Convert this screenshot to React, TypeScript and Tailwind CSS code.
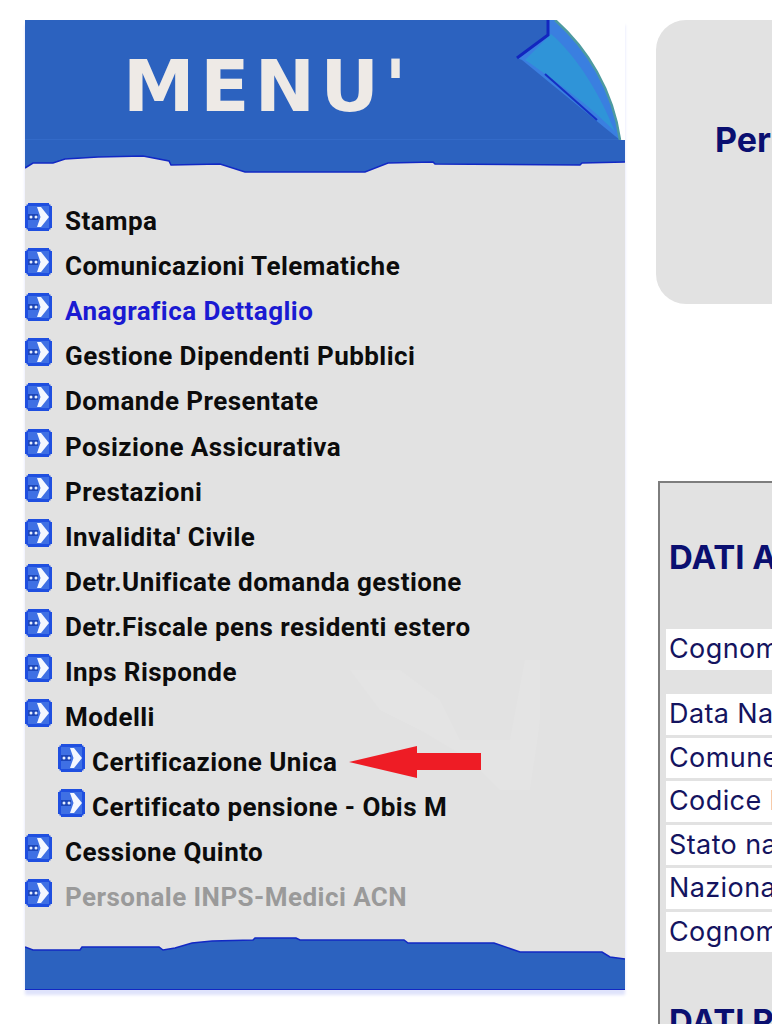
const menuItems = [
  { label: 'Stampa' },
  { label: 'Comunicazioni Telematiche' },
  { label: 'Anagrafica Dettaglio', tone: 'text-[#1a1ad2]' },
  { label: 'Gestione Dipendenti Pubblici' },
  { label: 'Domande Presentate' },
  { label: 'Posizione Assicurativa' },
  { label: 'Prestazioni' },
  { label: "Invalidita' Civile" },
  { label: 'Detr.Unificate domanda gestione' },
  { label: 'Detr.Fiscale pens residenti estero' },
  { label: 'Inps Risponde' },
  { label: 'Modelli' },
  { label: 'Certificazione Unica', sub: true },
  { label: 'Certificato pensione - Obis M', sub: true },
  { label: 'Cessione Quinto' },
  { label: 'Personale INPS-Medici ACN', tone: 'text-[#9a9a9a]' },
];

const dataRows = ['Data Nascita', 'Comune', 'Codice Fiscale', 'Stato nascita', 'Nazionalità', 'Cognome'];

function BulletIcon() {
  return (
    <svg viewBox="0 0 27 28" className="h-[28px] w-[27px] shrink-0">
      <path d="M3 0H24V1.5H25.5V3H27V25H25.5V26.5H24V28H3V26.5H1.5V25H0V3H1.5V1.5H3Z" fill="#1f4fe0" />
      <path d="M3 3H24V25H3Z" fill="#3f70e4" />
      <path d="M12 4H16L24 14L16 24H12L15.5 14Z" fill="#f4f7ff" />
      <path d="M3 11H13V17H3Z" fill="#1d46b8" />
      <circle cx="6" cy="14" r="1.5" fill="#e6eeff" />
      <circle cx="11" cy="14" r="1.5" fill="#e6eeff" />
    </svg>
  );
}

function PageCurl() {
  return (
    <svg viewBox="0 0 110 120" className="absolute right-0 top-0 h-[120px] w-[110px]">
      <path d="M40 0H110V120H105C98 70 72 28 40 0Z" fill="#ffffff" />
      <path d="M34 0H40C72 28 98 70 105 120L100 116L7 40L2 38L34 15Z" fill="#3a7fe0" />
      <path d="M36 14C62 36 86 76 100 112C80 90 40 60 10 40Z" fill="#2f94d8" />
      <path d="M40 0C72 28 98 70 105 120" fill="none" stroke="#4d9a9f" strokeWidth="2.5" />
      <path d="M33 0V15L2 38" fill="none" stroke="#1226bf" strokeWidth="3" />
      <path d="M30 54L82 100" fill="none" stroke="#1430c4" strokeWidth="2" />
    </svg>
  );
}

function TopWave() {
  return (
    <svg viewBox="0 0 600 40" preserveAspectRatio="none" className="block h-10 w-full">
      <path
        d="M0 0H600V22L557 23L555 25L410 24L408 22L363 23L340 32H220L195 24L146 25L144 21L118 16L73 17L40 19L28 23L8 23L0 28Z"
        fill="#2c62bf"
      />
      <path
        d="M0 28L8 23L28 23L40 19L73 17L118 16L144 21L146 25L195 24L220 32H340L363 23L408 22L410 24L555 25L557 23L600 22"
        fill="none"
        stroke="#1228c4"
        strokeWidth="1.5"
      />
    </svg>
  );
}

function BottomWave() {
  return (
    <svg viewBox="0 0 600 59" preserveAspectRatio="none" className="block h-[59px] w-full">
      <path
        d="M0 17L8 20H55L57 17H134L138 20L150 18L167 13L187 11L228 10L230 8H271L275 10L379 10L383 13L469 13L495 22H577L585 27L600 29V59H0Z"
        fill="#2c62bf"
      />
      <path
        d="M0 17L8 20H55L57 17H134L138 20L150 18L167 13L187 11L228 10L230 8H271L275 10L379 10L383 13L469 13L495 22H577L585 27L600 29"
        fill="none"
        stroke="#1228c4"
        strokeWidth="1.5"
      />
    </svg>
  );
}

function RedArrow() {
  return (
    <svg viewBox="0 0 134 34" className="absolute left-[323px] top-[5px] h-[34px] w-[134px]">
      <path d="M1 17L69 1V8H133V25H69V33Z" fill="#ee1c25" />
    </svg>
  );
}

function Watermark() {
  return (
    <svg viewBox="0 0 200 130" className="absolute left-[315px] top-[480px] h-[130px] w-[200px]">
      <path d="M10 10H60L100 40L120 80H170L185 0H200V60L190 130H160L130 100L80 70L40 50Z" fill="#e4e4e4" />
    </svg>
  );
}

function Menu() {
  return (
    <div className="w-[600px] shrink-0 bg-[#e2e2e2] shadow-[0_5px_3px_#dfe3fb] [font-family:Roboto,sans-serif]">
      <div className="relative h-[120px] border-b border-[#336ac8] bg-[#2c62bf] pl-[98px] pt-[30px]">
        <div className="text-[72px] font-bold leading-[72px] tracking-[5.5px] text-[#eeeae6] [font-family:'DejaVu_Sans',sans-serif]">
          MENU'
        </div>
        <PageCurl />
      </div>
      <TopWave />
      <ul className="relative pt-[19px]">
        <Watermark />
        {menuItems.map((item) => (
          <li
            key={item.label}
            className={`relative flex h-[45.1px] items-center ${item.sub ? 'pl-[33px]' : ''}`}
          >
            <span className="-mt-[9px]">
              <BulletIcon />
            </span>
            <span
              className={`whitespace-nowrap text-[26px] font-bold tracking-[0.45px] ${item.sub ? 'ml-[7px]' : 'ml-[13px]'} ${item.tone ?? 'text-[#0c0c0c]'}`}
            >
              {item.label}
            </span>
            {item.label === 'Certificazione Unica' && <RedArrow />}
          </li>
        ))}
      </ul>
      <div className="pt-[9px]">
        <BottomWave />
      </div>
      <div className="h-[1px] bg-[#1228c4]" />
    </div>
  );
}

export default function App() {
  return (
    <div className="flex h-[1024px] w-[772px] items-start gap-[31px] overflow-hidden bg-white pl-[25px] pt-[20px]">
      <Menu />
      <div className="flex min-w-0 flex-1 flex-col whitespace-nowrap [font-family:Inter,sans-serif]">
        <div className="flex h-[284px] items-center rounded-l-[30px] bg-[#e2e2e2] pb-[46px] pl-[59px]">
          <span className="text-[34px] font-bold text-[#0a0f70]">Per</span>
        </div>
        <div className="ml-[2px] mt-[177px] h-[600px] border-l-2 border-t-2 border-[#7d7d7d] bg-[#e2e2e2] pl-[6px]">
          <h2 className="pl-[3px] pt-[51px] text-[33px] font-bold leading-[46px] text-[#0a0f70]">DATI ANAGRAFICI</h2>
          <div className="mt-[49px] flex h-[41px] items-center bg-white pl-[3px] text-[27px] tracking-[0.4px] text-[#14145f]">Cognome</div>
          <div className="mt-[24px] flex flex-col gap-[3px]">
            {dataRows.map((row) => (
              <div key={row} className="flex h-[40.5px] items-center bg-white pl-[3px] text-[27px] tracking-[0.4px] text-[#14145f]">
                {row}
              </div>
            ))}
          </div>
          <h2 className="pl-[3px] pt-[46px] text-[33px] font-bold leading-[46px] text-[#0a0f70]">DATI PENSIONE</h2>
        </div>
      </div>
    </div>
  );
}
